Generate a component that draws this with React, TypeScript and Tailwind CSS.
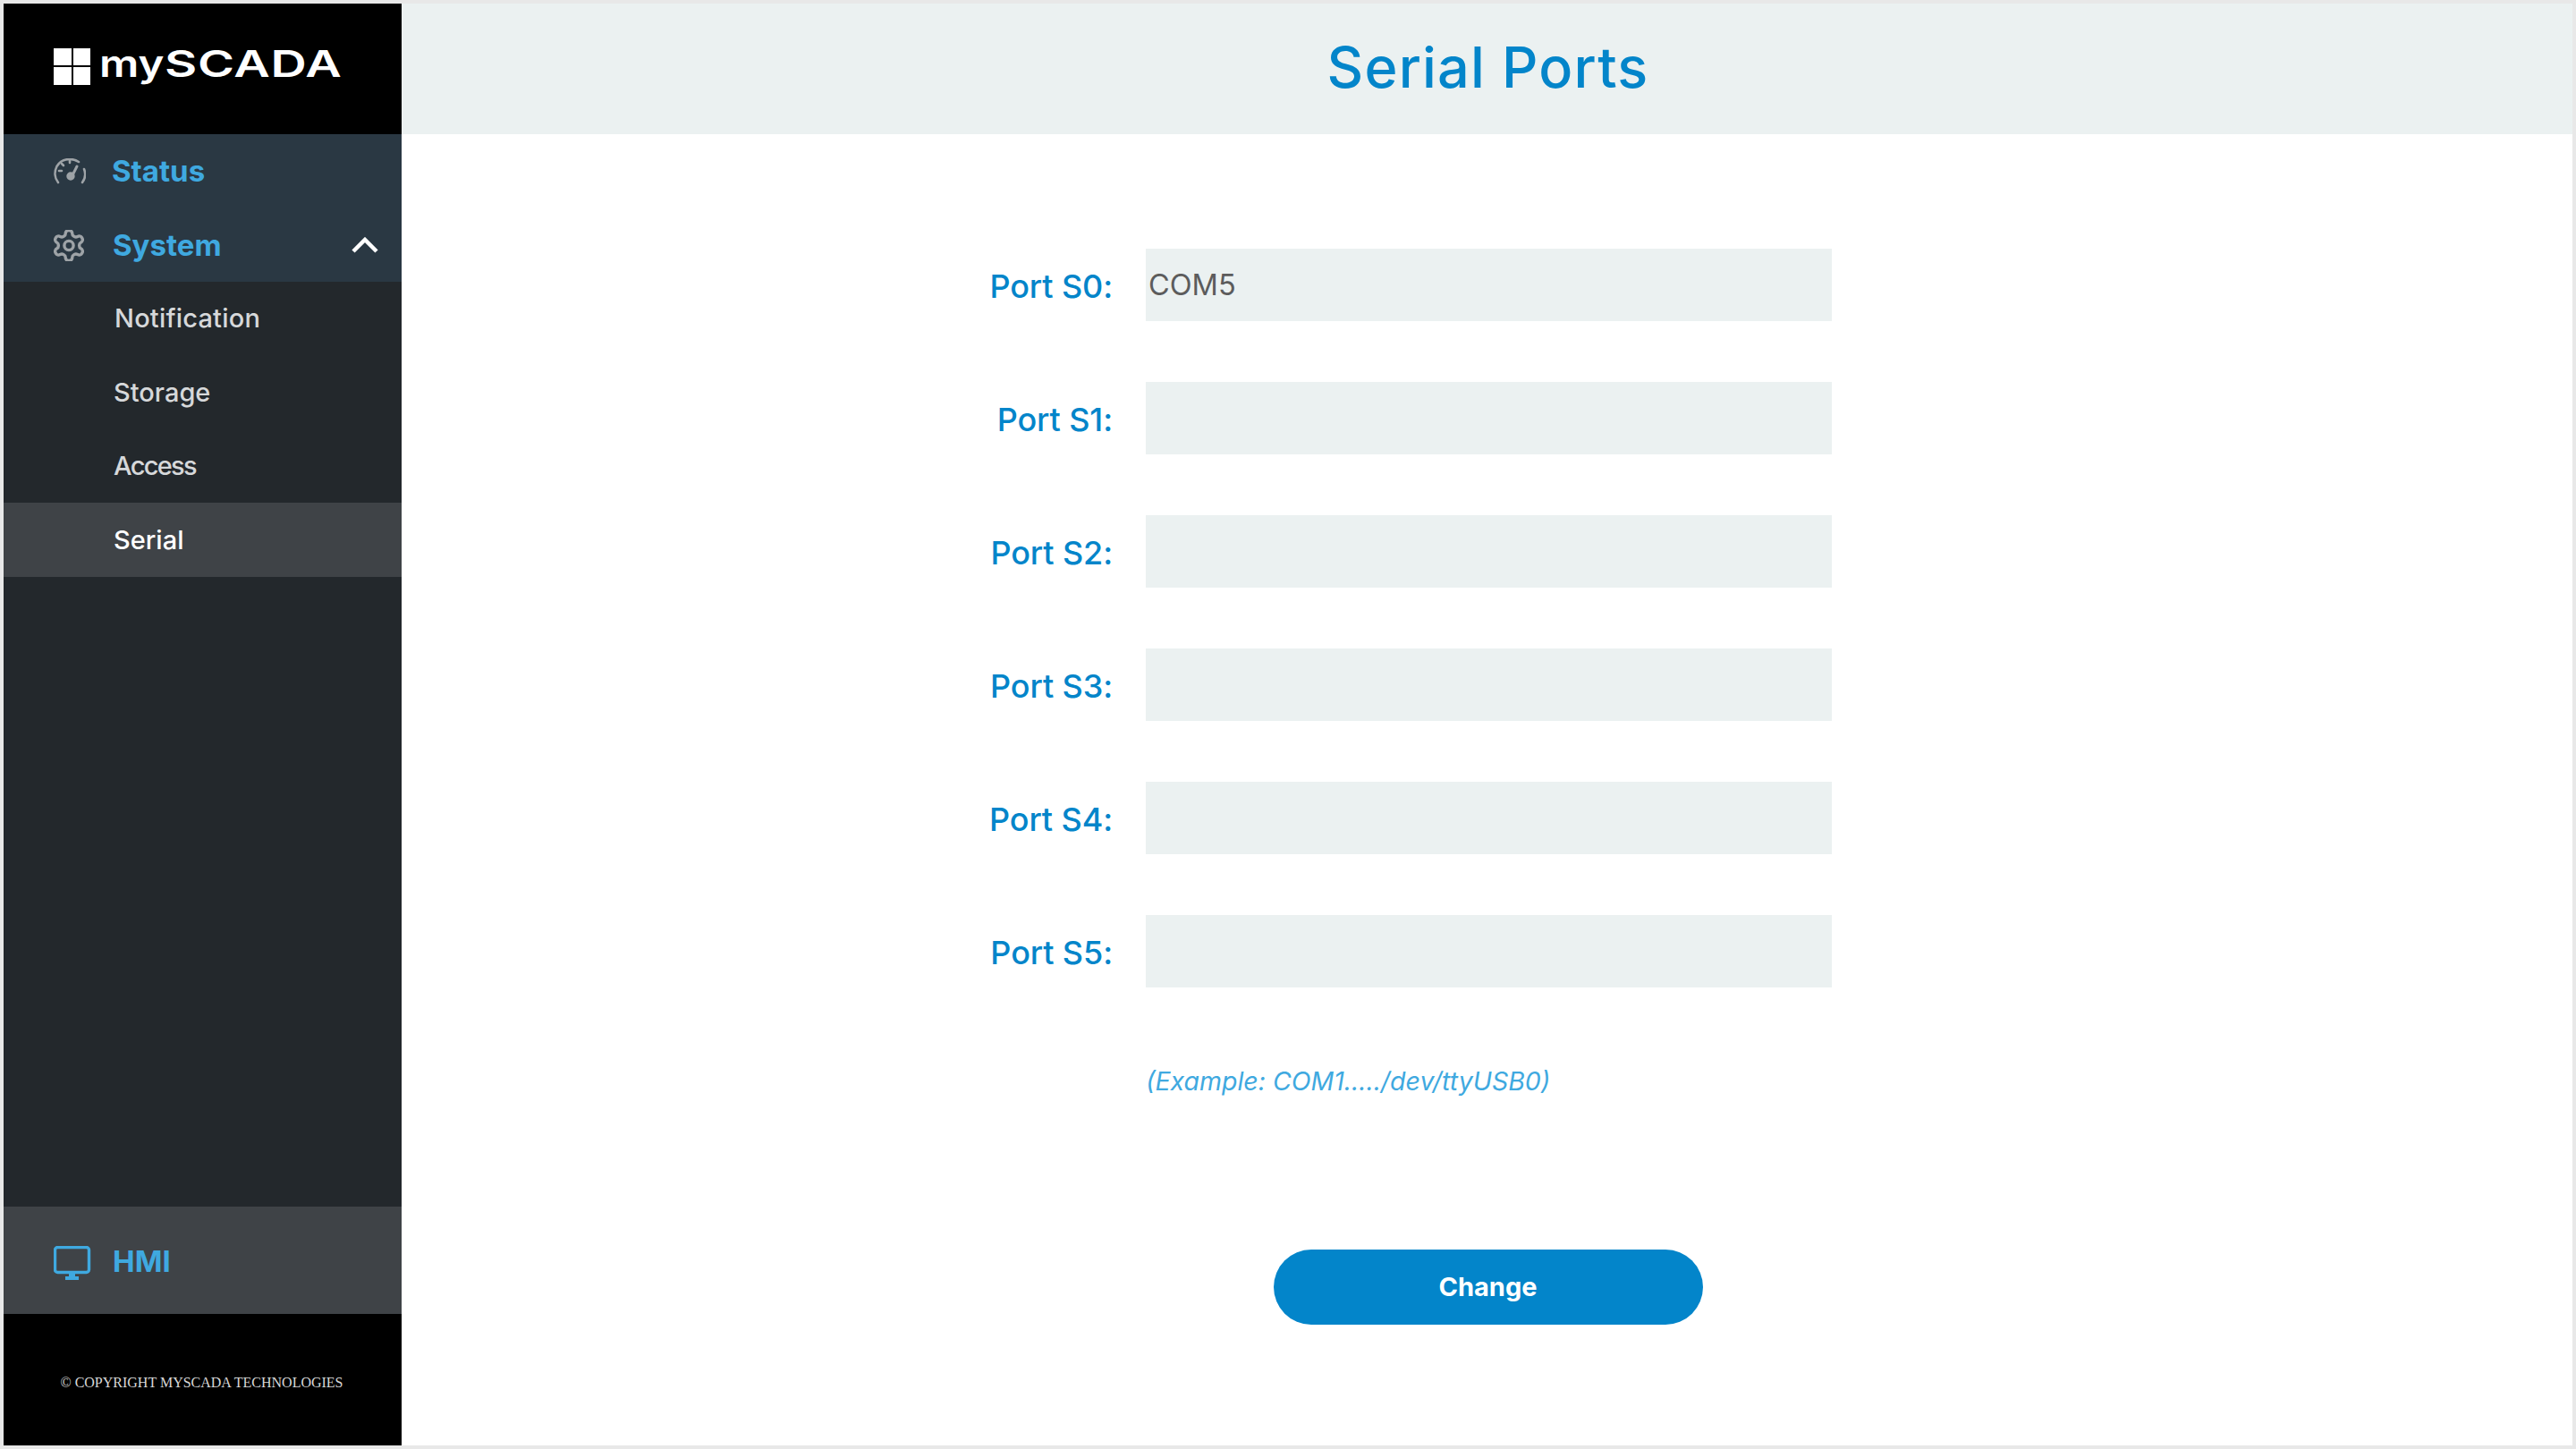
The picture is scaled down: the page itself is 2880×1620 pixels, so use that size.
const PORTS = ["Port S0:", "Port S1:", "Port S2:", "Port S3:", "Port S4:", "Port S5:"];
const VALUES = ["COM5", "", "", "", "", ""];

function Gauge() {
  return (
    <svg width="36" height="30" viewBox="0 0 36 30" fill="none" stroke="#9ea3a7" strokeWidth="2.6" strokeLinecap="round">
      <path d="M5 27 C1 22 0.5 15 3.5 9 C7 3 13 1 18 1 C22 1 25 2 28 4" />
      <path d="M32 27 C35 23 36 17 34 12" />
      <path d="M18 2 V5 M6 14 H9 M9 6 L11 8" />
      <path d="M26 9 L21 19" strokeWidth="3" />
      <circle cx="19" cy="20" r="3.4" fill="#9ea3a7" />
    </svg>
  );
}

function Gear() {
  return (
    <svg width="34" height="35" viewBox="2 2 20 20" fill="none" stroke="#9ea3a7" strokeWidth="2" strokeLinecap="round" strokeLinejoin="round">
      <path d="M12.22 2h-.44a2 2 0 0 0-2 2v.18a2 2 0 0 1-1 1.73l-.43.25a2 2 0 0 1-2 0l-.15-.08a2 2 0 0 0-2.73.73l-.22.38a2 2 0 0 0 .73 2.73l.15.1a2 2 0 0 1 1 1.72v.51a2 2 0 0 1-1 1.74l-.15.09a2 2 0 0 0-.73 2.73l.22.38a2 2 0 0 0 2.73.73l.15-.08a2 2 0 0 1 2 0l.43.25a2 2 0 0 1 1 1.73V20a2 2 0 0 0 2 2h.44a2 2 0 0 0 2-2v-.18a2 2 0 0 1 1-1.73l.43-.25a2 2 0 0 1 2 0l.15.08a2 2 0 0 0 2.73-.73l.22-.39a2 2 0 0 0-.73-2.73l-.15-.08a2 2 0 0 1-1-1.74v-.5a2 2 0 0 1 1-1.74l.15-.09a2 2 0 0 0 .73-2.73l-.22-.38a2 2 0 0 0-2.73-.73l-.15.08a2 2 0 0 1-2 0l-.43-.25a2 2 0 0 1-1-1.73V4a2 2 0 0 0-2-2z" />
      <circle cx="12" cy="12" r="3" />
    </svg>
  );
}

function Monitor() {
  return (
    <svg width="42" height="38" viewBox="0 0 42 38" fill="none">
      <rect x="1.5" y="1.5" width="38" height="28" rx="3" stroke="#3fa9e0" strokeWidth="3.4" />
      <path d="M17 30 H24 V34 H28 V38 H13 V34 H17 Z" fill="#3fa9e0" />
    </svg>
  );
}

function Logo() {
  return (
    <div className="flex items-center">
      <div className="grid grid-cols-2 gap-[2px] w-[41px] h-[41px] mr-[10px]">
        <div className="bg-white" />
        <div className="bg-white" />
        <div className="bg-white" />
        <div className="bg-white" />
      </div>
      <div className="flex text-white text-[41px] leading-none font-semibold font-['Inter',sans-serif] mt-[-6px]">
        <span className="w-[73px] inline-block scale-x-[1.2] origin-left">my</span>
        <span className="inline-block scale-x-[1.36] origin-left tracking-[0.5px]">SCADA</span>
      </div>
    </div>
  );
}

export default function App() {
  const font = "font-['Inter','Open_Sans',sans-serif]";
  return (
    <div className={`w-[2880px] h-[1620px] bg-[#e8e8e8] p-[4px] ${font}`}>
      <div className="flex h-full bg-white">
        <aside className="w-[445px] flex flex-col bg-[#23282c] shrink-0">
          <div className="h-[146px] bg-black flex items-center pl-[56px] pb-[6px]">
            <Logo />
          </div>
          <div className="h-[165px] bg-[#2a3843] flex flex-col">
            <div className="h-[83px] flex items-center pl-[56px]">
              <div className="w-[65px]"><Gauge /></div>
              <span className="text-[33px] font-bold text-[#3fa9e0]">Status</span>
            </div>
            <div className="h-[82px] flex items-center pl-[56px] pr-[26px]">
              <div className="w-[66px]"><Gear /></div>
              <span className="text-[33px] font-bold text-[#3fa9e0] flex-1 pt-[2px]">System</span>
              <svg width="30" height="18" viewBox="0 0 30 18" fill="none" stroke="#fff" strokeWidth="4.5"><path d="M2 16 L15 3 L28 16" /></svg>
            </div>
          </div>
          <nav className="flex flex-col text-[29px] text-[#d6d8da] font-medium">
            <div className="h-[82px] flex items-center pl-[124px] tracking-[0.2px]">Notification</div>
            <div className="h-[83px] flex items-center pl-[123px]">Storage</div>
            <div className="h-[82px] flex items-center pl-[123px] tracking-[-1.7px]">Access</div>
            <div className="h-[83px] flex items-center pl-[123px] bg-[#3f4347] text-white">Serial</div>
          </nav>
          <div className="flex-1" />
          <div className="h-[120px] bg-[#3f4347] flex items-center pl-[56px]">
            <div className="w-[66px] pt-[6px]"><Monitor /></div>
            <span className="text-[33px] font-bold text-[#3fa9e0] pt-[4px]">HMI</span>
          </div>
          <div className="h-[147px] bg-black flex items-center justify-center text-[#d8d8d8] text-[16px] font-['Liberation_Serif',serif] pt-[6px] pr-[2px]">
            © COPYRIGHT MYSCADA TECHNOLOGIES
          </div>
        </aside>
        <main className="flex-1 flex flex-col">
          <header className="h-[146px] bg-[#ebf1f1] flex items-center justify-center pb-[3px] pl-[2px]">
            <h1 className="text-[63px] font-medium text-[#0385ca] tracking-[1.2px]">Serial Ports</h1>
          </header>
          <div className="flex flex-col pt-[128px]">
            <div className="ml-[434px] w-[1165px] flex flex-col gap-[68px]">
              {PORTS.map((p, i) => (
                <div key={p} className="flex items-center h-[81px]">
                  <label className="w-[361px] text-right text-[36px] font-medium text-[#0385ca] pt-[3px] tracking-[-0.1px]">{p}</label>
                  <div className="ml-[37px] w-[767px] h-[81px] bg-[#ebf1f1] flex items-center pl-[3px] pt-[2px] text-[32.5px] text-[#5c5c5c]">{VALUES[i]}</div>
                </div>
              ))}
              <div className="pl-[398px] mt-[16px] italic text-[28.5px] text-[#3fa9e0]">(Example: COM1...../dev/ttyUSB0)</div>
            </div>
            <button className="mt-[166px] self-center ml-[2px] w-[480px] h-[84px] rounded-full bg-[#0385ca] text-white text-[29px] font-bold">Change</button>
          </div>
        </main>
      </div>
    </div>
  );
}
